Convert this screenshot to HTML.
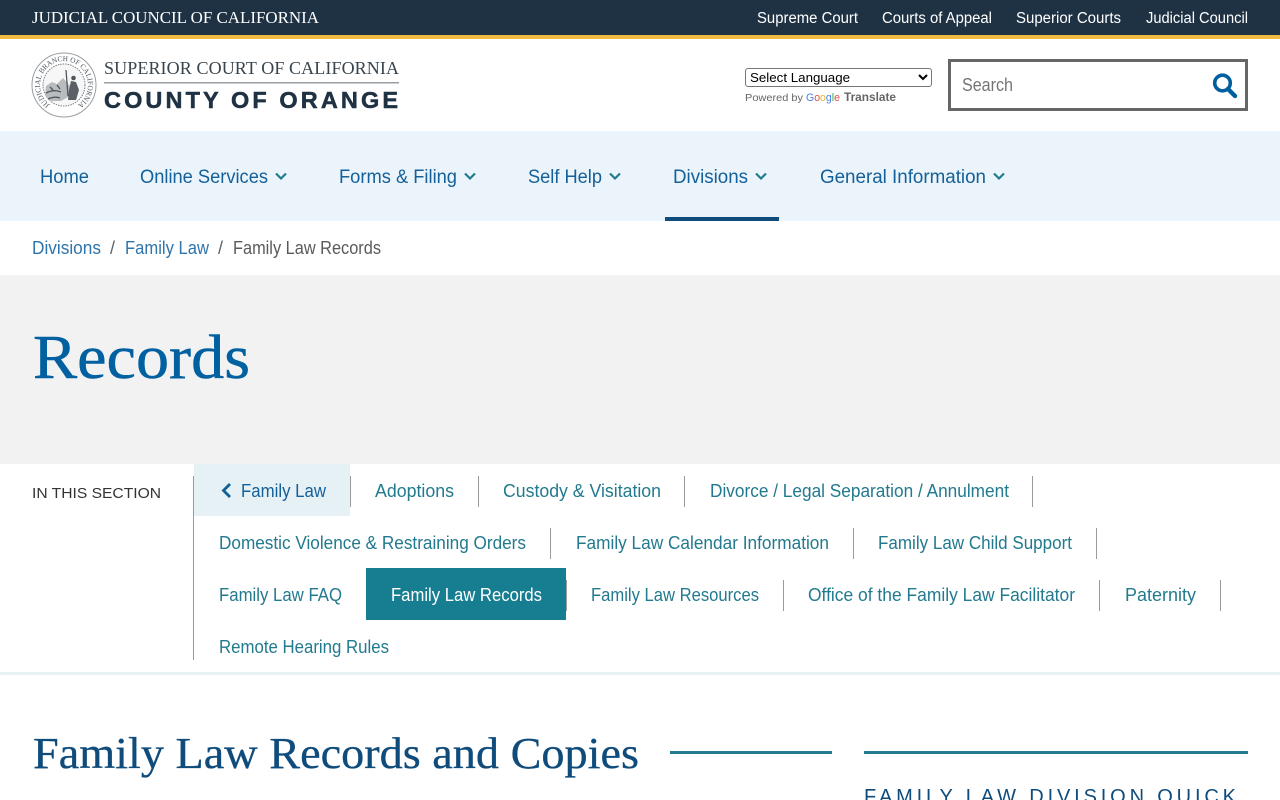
<!DOCTYPE html>
<html lang="en"><head><meta charset="utf-8"><title>Family Law Records and Copies</title>
<style>
html,body{margin:0;padding:0;width:1280px;height:800px;overflow:hidden;background:#fff}
svg{position:absolute;left:0;top:0;display:block}
text{font-family:"Liberation Sans",sans-serif}
.s{font-family:"Liberation Serif",serif}
.top{font-size:15.500px;fill:#fff}
.nav{font-size:19px;fill:#14609a}
.sub{font-size:18px;fill:#227a8e}
.bc{font-size:18px;fill:#2f74ab}
select{position:absolute;left:745px;top:68px;width:187px;height:19px;font:13.333px "Liberation Sans",Arial,sans-serif;padding:0;color:#000;background:#fff;border:1px solid #767676;border-radius:3px;box-sizing:border-box}
</style></head><body>
<svg width="1280" height="800" viewBox="0 0 1280 800" xmlns="http://www.w3.org/2000/svg">
<defs><path id="ring" d="M50.200 104.700A24 24 0 1 1 77.800 104.700"/></defs>
<rect width="1280" height="35" fill="#1f3244"/>
<rect y="35" width="1280" height="4" fill="#f0b942"/>
<text class="s" x="32" y="23" font-size="17" fill="#fff" textLength="287" lengthAdjust="spacingAndGlyphs">JUDICIAL COUNCIL OF CALIFORNIA</text>
<text class="top" x="757" y="23" textLength="101" lengthAdjust="spacingAndGlyphs">Supreme Court</text>
<text class="top" x="882" y="23" textLength="110" lengthAdjust="spacingAndGlyphs">Courts of Appeal</text>
<text class="top" x="1016" y="23" textLength="105" lengthAdjust="spacingAndGlyphs">Superior Courts</text>
<text class="top" x="1146" y="23" textLength="102" lengthAdjust="spacingAndGlyphs">Judicial Council</text>

<circle cx="64" cy="85" r="32" fill="#fff" stroke="#9a9ea2" stroke-width="1"/>
<circle cx="64" cy="85" r="21" fill="#f7f7f7" stroke="#7b8084" stroke-width="1" stroke-dasharray="1.500 1"/>
<text font-size="7.500" fill="#4d555b" class="s" textLength="121" lengthAdjust="spacingAndGlyphs"><textPath href="#ring">JUDICIAL BRANCH OF CALIFORNIA</textPath></text>
<path d="M46 86l6-4 5 2 6-6 7 8v10l-9 5H50l-5-6z" fill="#b9bcbe"/>
<path d="M46 93q8-4 15-1M48 99q7-3 12-1M50 87l3 3M57 85l3 4M66 70l2 26" fill="none" stroke="#50565b" stroke-width="1.300"/>
<path d="M71 81l5 1 3 8-3 10h-8l1-10z" fill="#5a6066"/>
<circle cx="73.500" cy="78" r="2.300" fill="#50565b"/>
<text class="s" x="104" y="74" font-size="18" fill="#39444c" textLength="295" lengthAdjust="spacing">SUPERIOR COURT OF CALIFORNIA</text>
<rect x="104" y="82" width="295" height="1.500" fill="#9a9fa3"/>
<text x="104" y="108" font-size="23.500" font-weight="700" fill="#1f3244" stroke="#1f3244" stroke-width=".5" textLength="294">COUNTY OF ORANGE</text>

<text x="745" y="101" font-size="10.500" fill="#666" textLength="58" lengthAdjust="spacingAndGlyphs">Powered by</text>
<text x="806" y="101" font-size="11" textLength="34" lengthAdjust="spacingAndGlyphs"><tspan fill="#4a82e8">G</tspan><tspan fill="#e0533f">o</tspan><tspan fill="#edb62f">o</tspan><tspan fill="#4a82e8">g</tspan><tspan fill="#38a853">l</tspan><tspan fill="#e0533f">e</tspan></text>
<text x="844" y="101" font-size="12" font-weight="700" fill="#666" textLength="52" lengthAdjust="spacingAndGlyphs">Translate</text>

<rect x="949.500" y="60.500" width="297" height="49" fill="#fff" stroke="#666" stroke-width="3"/>
<text x="962" y="91" font-size="18" fill="#757575" textLength="51" lengthAdjust="spacingAndGlyphs">Search</text>
<circle cx="1222.500" cy="83" r="7.800" fill="none" stroke="#005f9e" stroke-width="3.600"/>
<path d="M1228 89l7 7" stroke="#005f9e" stroke-width="4.400" stroke-linecap="round"/>

<rect y="131" width="1280" height="90" fill="#ebf4fa"/>
<text class="nav" x="40" y="183" textLength="49" lengthAdjust="spacingAndGlyphs">Home</text>
<text class="nav" x="140" y="183" textLength="128" lengthAdjust="spacingAndGlyphs">Online Services</text>
<text class="nav" x="339" y="183" textLength="118" lengthAdjust="spacingAndGlyphs">Forms &amp; Filing</text>
<text class="nav" x="528" y="183" textLength="74" lengthAdjust="spacingAndGlyphs">Self Help</text>
<text class="nav" x="673" y="183" textLength="75" lengthAdjust="spacingAndGlyphs">Divisions</text>
<text class="nav" x="820" y="183" textLength="166" lengthAdjust="spacingAndGlyphs">General Information</text>
<g fill="none" stroke="#227a8e" stroke-width="2.200">
<path d="M276 173.500l5 5 5-5"/><path d="M465 173.500l5 5 5-5"/><path d="M610 173.500l5 5 5-5"/><path d="M756 173.500l5 5 5-5"/><path d="M994 173.500l5 5 5-5"/>
</g>
<rect x="665" y="217" width="114" height="4" fill="#0f4c7c"/>

<text class="bc" x="32" y="254" textLength="69" lengthAdjust="spacingAndGlyphs">Divisions</text>
<text x="110" y="254" font-size="18" fill="#5c6670">/</text>
<text class="bc" x="125" y="254" textLength="84" lengthAdjust="spacingAndGlyphs">Family Law</text>
<text x="218" y="254" font-size="18" fill="#5c6670">/</text>
<text x="233" y="254" font-size="18" fill="#5a5a5a" textLength="148" lengthAdjust="spacingAndGlyphs">Family Law Records</text>

<rect y="275" width="1280" height="189" fill="#f2f2f2"/>
<text class="s" x="33" y="378" font-size="62" fill="#0060a0" stroke="#0060a0" stroke-width=".5" textLength="217" lengthAdjust="spacingAndGlyphs">Records</text>

<rect x="194" y="464" width="156" height="52" fill="#e6f1f5"/>
<rect x="366" y="568" width="200" height="52" fill="#177e92"/>
<g fill="#9a9a9a">
<rect x="193" y="476" width="1" height="184"/>
<rect x="350" y="476" width="1" height="31"/><rect x="478" y="476" width="1" height="31"/><rect x="684" y="476" width="1" height="31"/><rect x="1032" y="476" width="1" height="31"/>
<rect x="550" y="528" width="1" height="31"/><rect x="853" y="528" width="1" height="31"/><rect x="1096" y="528" width="1" height="31"/>
<rect x="566" y="580" width="1" height="31"/><rect x="783" y="580" width="1" height="31"/><rect x="1099" y="580" width="1" height="31"/><rect x="1220" y="580" width="1" height="31"/>
</g>
<text x="32" y="498" font-size="15" fill="#333" textLength="129" lengthAdjust="spacingAndGlyphs">IN THIS SECTION</text>
<path d="M230 484l-6.500 6.500 6.500 6.500" fill="none" stroke="#0f5f99" stroke-width="2.800"/>
<text x="241" y="497" font-size="18" fill="#14609a" textLength="85" lengthAdjust="spacingAndGlyphs">Family Law</text>
<text class="sub" x="375" y="497" textLength="79" lengthAdjust="spacingAndGlyphs">Adoptions</text>
<text class="sub" x="503" y="497" textLength="158" lengthAdjust="spacingAndGlyphs">Custody &amp; Visitation</text>
<text class="sub" x="710" y="497" textLength="299" lengthAdjust="spacingAndGlyphs">Divorce / Legal Separation / Annulment</text>
<text class="sub" x="219" y="549" textLength="307" lengthAdjust="spacingAndGlyphs">Domestic Violence &amp; Restraining Orders</text>
<text class="sub" x="576" y="549" textLength="253" lengthAdjust="spacingAndGlyphs">Family Law Calendar Information</text>
<text class="sub" x="878" y="549" textLength="194" lengthAdjust="spacingAndGlyphs">Family Law Child Support</text>
<text class="sub" x="219" y="601" textLength="123" lengthAdjust="spacingAndGlyphs">Family Law FAQ</text>
<text x="391" y="601" font-size="18" fill="#fff" textLength="151" lengthAdjust="spacingAndGlyphs">Family Law Records</text>
<text class="sub" x="591" y="601" textLength="168" lengthAdjust="spacingAndGlyphs">Family Law Resources</text>
<text class="sub" x="808" y="601" textLength="267" lengthAdjust="spacingAndGlyphs">Office of the Family Law Facilitator</text>
<text class="sub" x="1125" y="601" textLength="71" lengthAdjust="spacingAndGlyphs">Paternity</text>
<text class="sub" x="219" y="653" textLength="170" lengthAdjust="spacingAndGlyphs">Remote Hearing Rules</text>
<rect y="672" width="1280" height="3" fill="#e7f0f4"/>

<text class="s" x="33" y="768" font-size="44" fill="#0f4c7c" stroke="#0f4c7c" stroke-width=".3" textLength="606" lengthAdjust="spacingAndGlyphs">Family Law Records and Copies</text>
<rect x="670" y="751" width="162" height="3" fill="#247b90"/>
<rect x="864" y="751" width="384" height="3" fill="#247b90"/>
<text x="864" y="803" font-size="20" fill="#0f4c7c" textLength="372">FAMILY LAW DIVISION QUICK</text>
</svg>
<select aria-label="Select Language"><option>Select Language</option></select>
</body></html>
